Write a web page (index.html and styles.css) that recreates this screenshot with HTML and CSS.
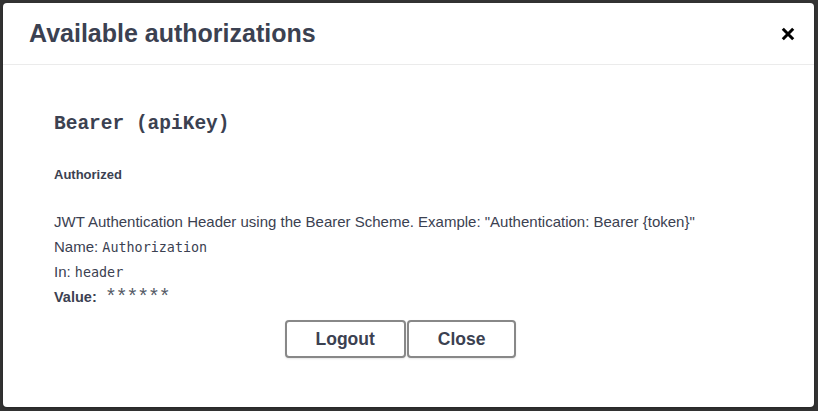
FILE: index.html
```html
<!DOCTYPE html>
<html>
<head>
<meta charset="utf-8">
<link rel="stylesheet" href="styles.css">
</head>
<body>
<div class="modal">
  <div class="modal-header">
    <h3 class="modal-title">Available authorizations</h3>
    <button class="close-btn" aria-label="Close">
      <svg width="14" height="14" viewBox="0 0 14 14"><path d="M1.8 1.8 L12.2 12.2 M12.2 1.8 L1.8 12.2" stroke="#000" stroke-width="3" stroke-linecap="butt" fill="none"/></svg>
    </button>
  </div>
  <div class="modal-body">
    <h4 class="scheme-title">Bearer (apiKey)</h4>
    <h6 class="status">Authorized</h6>
    <div class="info">
      <p class="line">JWT Authentication Header using the Bearer Scheme. Example: "Authentication: Bearer {token}"</p>
      <p class="line">Name: <code class="mono">Authorization</code></p>
      <p class="line">In: <code class="mono">header</code></p>
      <p class="line"><span class="label">Value:</span> <span class="value">******</span></p>
    </div>
    <div class="btn-wrapper">
      <button class="btn">Logout</button>
      <button class="btn btn-done">Close</button>
    </div>
  </div>
</div>
</body>
</html>
```

FILE: styles.css
```css
html, body {
  margin: 0;
  padding: 0;
}
body {
  background: #333333;
  width: 818px;
  height: 411px;
  overflow: hidden;
  font-family: "Liberation Sans", Arial, sans-serif;
  color: #3b4151;
}
.modal {
  margin: 3px 4px 0 3px;
  height: 404px;
  background: #ffffff;
  border-radius: 4px;
  box-shadow: 0 1px 3px rgba(0,0,0,0.3);
  display: flex;
  flex-direction: column;
}
.modal-header {
  display: flex;
  align-items: center;
  justify-content: space-between;
  height: 61px;
  padding: 0 19px 0 26px;
  border-bottom: 1px solid #ebebeb;
}
.modal-title {
  margin: 0;
  font-size: 25px;
  font-weight: 700;
  color: #3b4151;
}
.close-btn {
  border: 0;
  background: none;
  padding: 0;
  width: 14px;
  height: 14px;
  display: flex;
}
.modal-body {
  padding: 44px 51px 0 51px;
  display: flex;
  flex-direction: column;
}
.scheme-title {
  margin: 0;
  font-family: "Liberation Mono", "DejaVu Sans Mono", monospace;
  font-size: 19.5px;
  font-weight: 700;
  line-height: 30px;
  color: #3b4151;
}
.status {
  margin: 26px 0 0 0;
  font-size: 13px;
  font-weight: 700;
  line-height: 20px;
  color: #3b4151;
}
.info {
  margin-top: 24px;
}
.line {
  margin: 0;
  font-size: 15px;
  line-height: 25px;
  height: 25px;
  color: #3b4151;
}
.mono {
  font-family: "DejaVu Sans Mono", "Liberation Mono", monospace;
  font-size: 13.4px;
  line-height: 1;
  color: #3b4151;
}
.label {
  font-size: 14.5px;
  font-weight: 700;
  line-height: 1;
}
.value {
  font-size: 20px;
  line-height: 1;
  color: #555a66;
  letter-spacing: 3px;
  margin-left: 6px;
}
.btn-wrapper {
  display: flex;
  justify-content: center;
  margin-top: 11px;
}
.btn {
  height: 38px;
  padding: 0 29px;
  border: 2px solid #888888;
  border-radius: 4px;
  background: #ffffff;
  font-family: "Liberation Sans", Arial, sans-serif;
  font-size: 17.5px;
  font-weight: 700;
  color: #3b4151;
  box-shadow: 0 1px 2px rgba(0,0,0,0.1);
  margin: 0;
}
.btn-done {
  margin-left: 1px;
  margin-right: 16px;
}
```
